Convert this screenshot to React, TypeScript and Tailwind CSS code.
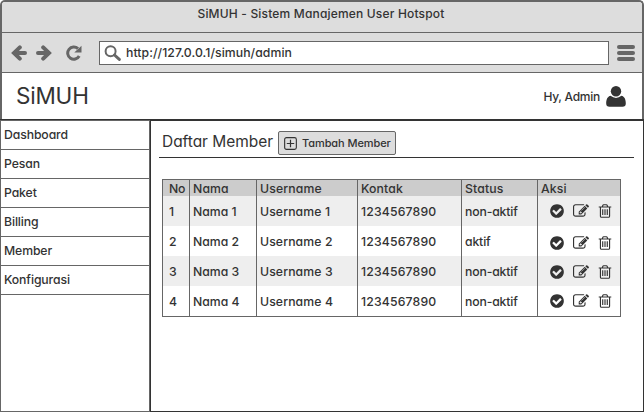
import React from "react";

const menu = ["Dashboard", "Pesan", "Paket", "Billing", "Member", "Konfigurasi"];

const rows = [
  { no: 1, status: "non-aktif", shift: "pt-0" },
  { no: 2, status: "aktif", shift: "pt-[3px]" },
  { no: 3, status: "non-aktif", shift: "pt-[1px]" },
  { no: 4, status: "non-aktif", shift: "pt-0" },
];

const columns = "grid grid-cols-[27px_67px_101px_104px_76px_83px]";
const cell = "pl-[3px] border-r border-[#666] flex items-center";
const textCell = `${cell} pt-[1px]`;

function Glyph({ d, className }: { d: string; className: string }) {
  return (
    <svg viewBox="0 0 1792 1792" className={className} fill="currentColor">
      <path d={d} />
    </svg>
  );
}

const CHECK =
  "M1412 734q0-28-18-46l-91-90q-19-19-45-19t-45 19l-408 407-226-226q-19-19-45-19t-45 19l-91 90q-18 18-18 46 0 27 18 45l362 362q19 19 45 19 27 0 46-19l543-543q18-18 18-45zm252 162q0 209-103 385.5t-279.5 279.5-385.5 103-385.5-103-279.5-279.5-103-385.5 103-385.5 279.5-279.5 385.5-103 385.5 103 279.5 279.5 103 385.5z";
const EDIT =
  "M888 1184l116-116-152-152-116 116v56h96v96h56zm440-720q-16-16-33 1l-350 350q-17 17-1 33t33-1l350-350q17-17 1-33zm80 594v190q0 119-84.5 203.5t-203.5 84.5h-832q-119 0-203.5-84.5t-84.5-203.5v-832q0-119 84.5-203.5t203.5-84.5h832q63 0 117 25 15 7 18 23 3 17-9 29l-49 49q-14 14-32 8-23-6-45-6h-832q-66 0-113 47t-47 113v832q0 66 47 113t113 47h832q66 0 113-47t47-113v-126q0-13 9-22l64-64q15-15 35-7t20 29zm-96-738l288 288-672 672h-288v-288zm444 132l-92 92-288-288 92-92q28-28 68-28t68 28l152 152q28 28 28 68t-28 68z";
const TRASH =
  "M704 736v576q0 14-9 23t-23 9h-64q-14 0-23-9t-9-23v-576q0-14 9-23t23-9h64q14 0 23 9t9 23zm256 0v576q0 14-9 23t-23 9h-64q-14 0-23-9t-9-23v-576q0-14 9-23t23-9h64q14 0 23 9t9 23zm256 0v576q0 14-9 23t-23 9h-64q-14 0-23-9t-9-23v-576q0-14 9-23t23-9h64q14 0 23 9t9 23zm128 724v-948h-896v948q0 22 7 40.5t14.5 27 10.5 8.5h832q3 0 10.5-8.5t14.5-27 7-40.5zm-672-1076h448l-48-117q-7-9-17-11h-317q-10 2-17 11zm928 32v64q0 14-9 23t-23 9h-96v948q0 83-47 143.5t-113 60.5h-832q-66 0-113-58.5t-47-141.5v-952h-96q-14 0-23-9t-9-23v-64q0-14 9-23t23-9h309l70-167q15-37 54-63t79-26h320q40 0 79 26t54 63l70 167h309q14 0 23 9t9 23z";

function Arrow({ className }: { className: string }) {
  return (
    <svg viewBox="0 0 16 16" className={className} fill="none" stroke="#666" strokeWidth="4">
      <path d="M8.800 2.400 3 8 8.800 13.600M3.500 8H14" strokeLinecap="round" strokeLinejoin="miter" />
    </svg>
  );
}

function Toolbar() {
  return (
    <div className="flex h-[40px] items-center border-b border-[#666] bg-[#ddd] pl-[9px] pr-[7px]">
      <Arrow className="size-4" />
      <Arrow className="ml-[9px] size-4 rotate-180" />
      <svg viewBox="0 0 17 16" className="ml-[13px] h-4 w-[17px]">
        <path d="M13 3.700A6.100 6.100 0 1 0 14.200 11" fill="none" stroke="#666" strokeWidth="3" />
        <path d="M16.500.800V7.600H9.300Z" fill="#666" />
      </svg>
      <div className="ml-[17px] flex h-[24px] w-[510px] items-center border border-[#666] bg-white pl-[4px]">
        <svg viewBox="0 0 17 16" className="h-4 w-[17px]" fill="none" stroke="#666">
          <circle cx="6.600" cy="6.200" r="5" strokeWidth="2" />
          <path d="m10.500 10 4.800 4.400" strokeWidth="3" strokeLinecap="round" />
        </svg>
        <span className="ml-[5px] mt-[1px] tracking-[0.06px]">http://127.0.0.1/simuh/admin</span>
      </div>
      <div className="ml-auto flex w-[18px] flex-col gap-[2px]">
        <i className="h-[4px] rounded-full bg-[#666]" />
        <i className="h-[4px] rounded-full bg-[#666]" />
        <i className="h-[4px] rounded-full bg-[#666]" />
      </div>
    </div>
  );
}

export default function App() {
  return (
    <div className="flex h-[412px] w-[644px] flex-col overflow-hidden bg-white font-[Inter,sans-serif] text-[12.25px] font-[450] leading-4 text-[#333] whitespace-nowrap [font-feature-settings:'cv11']">
      <div className="h-[119px] overflow-hidden rounded-t-[5px] border-x-2 border-t-2 border-[#666]">
        <div className="flex h-[31px] items-start justify-center border-b border-[#666] bg-[#ddd] pt-[4px]">
          <span className="mr-[2px] text-[12px] tracking-[0.18px]">SiMUH - Sistem Manajemen User Hotspot</span>
        </div>
        <Toolbar />
        <div className="flex h-[46px] items-center justify-between pl-[14px] pr-[16px]">
          <span className="text-[22.5px] font-normal leading-7 tracking-[-0.2px]">SiMUH</span>
          <div className="flex items-center">
            <span className="mt-[2px] text-[12px] tracking-[-0.25px]">Hy, Admin</span>
            <svg viewBox="0 0 20 21" className="ml-[6px] h-[21px] w-[20px]" fill="#333">
              <path d="M4.500 9.800Q10 14 15.500 9.800C18.500 10.500 19.800 13.500 19.800 17.500Q19.800 20.700 16.500 20.700H3.500Q.2 20.700.2 17.500C.2 13.500 1.500 10.500 4.500 9.800Z" />
              <circle cx="10" cy="5.300" r="5.200" />
            </svg>
          </div>
        </div>
      </div>

      <div className="flex h-[293px] border-t border-[#333]">
        <nav className="w-[150px] border border-[#666]">
          {menu.map((item) => (
            <div key={item} className="flex h-[29px] items-center border-b border-[#666] pl-[3px]">
              <span className="tracking-[-0.12px]">{item}</span>
            </div>
          ))}
        </nav>
        <main className="flex-1 border border-[#333]">
          <div className="ml-[8px] mr-[9px] flex h-[37px] items-start border-b border-[#333] pl-[3px] pt-[10px]">
            <span className="w-[116px] text-[15.5px] font-normal leading-[21px] tracking-[-0.04px]">Daftar Member</span>
            <button className="flex h-[24px] w-[118px] items-center rounded-[2px] border border-[#666] bg-[#ddd] pl-[5px]">
              <svg viewBox="0 0 14 14" className="size-[13px] shrink-0" fill="none" stroke="#333">
                <rect x=".7" y=".7" width="12.600" height="12.600" rx="2" strokeWidth="1.200" />
                <path d="M7 3v8M3 7h8" strokeWidth="1.300" />
              </svg>
              <span className="ml-[5px] text-[11px] tracking-[-0.08px]">Tambah Member</span>
            </button>
          </div>

          <div className="ml-[11px] mt-[21px] w-[459px] border-y border-l border-[#666]">
            <div className={`${columns} h-[16px] bg-[#ccc] tracking-[0.12px]`}>
              <span className={`${textCell} !pl-[6px] !tracking-[-0.3px]`}>No</span>
              <span className={textCell}>Nama</span>
              <span className={textCell}>Username</span>
              <span className={textCell}>Kontak</span>
              <span className={textCell}>Status</span>
              <span className={textCell}>Aksi</span>
            </div>
            {rows.map((r) => (
              <div key={r.no} className={`${columns} h-[30px] odd:bg-white even:bg-[#eee]`}>
                <span className={`${textCell} !pl-[6px]`}>{r.no}</span>
                <span className={textCell}>Nama {r.no}</span>
                <span className={`${textCell} tracking-[0.1px]`}>Username {r.no}</span>
                <span className={`${textCell} tracking-[0.15px]`}>1234567890</span>
                <span className={`${textCell} tracking-[-0.15px]`}>{r.status}</span>
                <div className={`${cell} !pl-[11px] ${r.shift}`}>
                  <Glyph d={CHECK} className="size-4 shrink-0" />
                  <Glyph d={EDIT} className="ml-[8px] size-4 shrink-0" />
                  <Glyph d={TRASH} className="ml-[8px] size-4 shrink-0" />
                </div>
              </div>
            ))}
          </div>
        </main>
      </div>
    </div>
  );
}
